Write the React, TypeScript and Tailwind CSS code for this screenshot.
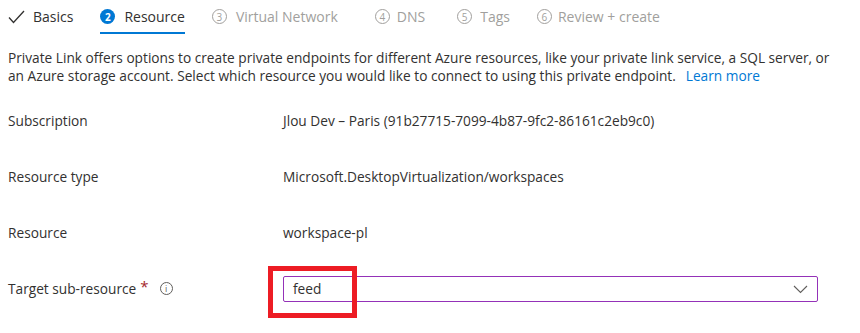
function StepCircle({ n, active }: { n: number; active?: boolean }) {
  if (active) {
    return (
      <span className="flex h-[15px] w-[15px] items-center justify-center rounded-full bg-[#0078d4] text-[10px] font-bold leading-none text-white">
        {n}
      </span>
    )
  }
  return (
    <span className="flex h-[15px] w-[15px] items-center justify-center rounded-full border border-[#a19f9d] text-[10px] leading-none text-[#a19f9d]">
      {n}
    </span>
  )
}

function App() {
  const rows = [
    { label: "Subscription", value: "Jlou Dev – Paris (91b27715-7099-4b87-9fc2-86161c2eb9c0)" },
    { label: "Resource type", value: "Microsoft.DesktopVirtualization/workspaces" },
    { label: "Resource", value: "workspace-pl" },
  ]

  return (
    <div className="h-[333px] w-[860px] overflow-hidden bg-white px-2 text-[13.7px] text-[#323130]" style={{ fontFamily: '"Open Sans", "Noto Sans", sans-serif' }}>
      {/* Wizard tabs */}
      <div className="flex h-[35px] items-start text-[14px]">
        <div className="flex h-[34px] items-center gap-2 pb-[1px]">
          <svg width="17" height="14" viewBox="0 0 17 14" fill="none">
            <path d="M1 7.5 L5.5 12.5 L16 1" stroke="#323130" strokeWidth="1.3" />
          </svg>
          <span>Basics</span>
        </div>
        <div className="ml-[27px] flex h-[34px] items-center gap-[9px] border-b-[2px] border-[#0078d4] pt-[1px]">
          <StepCircle n={2} active />
          <span className="text-[#323130]">Resource</span>
        </div>
        <div className="ml-[27px] flex h-[34px] items-center gap-[9px] pb-[1px] text-[#a19f9d]">
          <StepCircle n={3} />
          <span>Virtual Network</span>
        </div>
        <div className="ml-[37px] flex h-[34px] items-center gap-[7px] pb-[1px] text-[#a19f9d]">
          <StepCircle n={4} />
          <span>DNS</span>
        </div>
        <div className="ml-[32px] flex h-[34px] items-center gap-[8px] pb-[1px] text-[#a19f9d]">
          <StepCircle n={5} />
          <span>Tags</span>
        </div>
        <div className="ml-[27px] flex h-[34px] items-center gap-[6px] pb-[1px] text-[#a19f9d]">
          <StepCircle n={6} />
          <span>Review + create</span>
        </div>
      </div>

      {/* Intro */}
      <p className="mt-[14px] leading-[18px]">
        Private Link offers options to create private endpoints for different Azure resources, like your private link service, a SQL server, or
        <br />
        an Azure storage account. Select which resource you would like to connect to using this private endpoint.
        <a className="ml-[10px] text-[#0078d4]">Learn more</a>
      </p>

      {/* Fields */}
      <div className="mt-2 flex flex-col">
        {rows.map((r) => (
          <div key={r.label} className="flex h-[56px] items-center">
            <div className="w-[275px]">{r.label}</div>
            <div>{r.value}</div>
          </div>
        ))}
        <div className="flex h-[56px] items-center">
          <div className="flex w-[275px] items-center">
            <span>Target sub-resource</span>
            <span className="ml-[4px] -mt-[6px] text-[15px] text-[#a4262c]">*</span>
            <span className="ml-[11px] flex h-[13px] w-[13px] items-center justify-center rounded-full border border-[#605e5c] text-[9px] leading-none text-[#605e5c]">i</span>
          </div>
          <div className="relative">
            <div className="flex h-[26px] w-[535px] items-center justify-between rounded-[2px] border border-[#9431b8] pl-[9px] pr-[9px]">
              <span>feed</span>
              <svg width="15" height="9" viewBox="0 0 15 9" fill="none">
                <path d="M1 1 L7.5 7.5 L14 1" stroke="#605e5c" strokeWidth="1.1" />
              </svg>
            </div>
            {/* annotation box */}
            <div className="absolute left-[-15px] top-[-10px] h-[52px] w-[89px] border-[5px] border-[#ed1c24]" />
          </div>
        </div>
      </div>
    </div>
  )
}

export default App
